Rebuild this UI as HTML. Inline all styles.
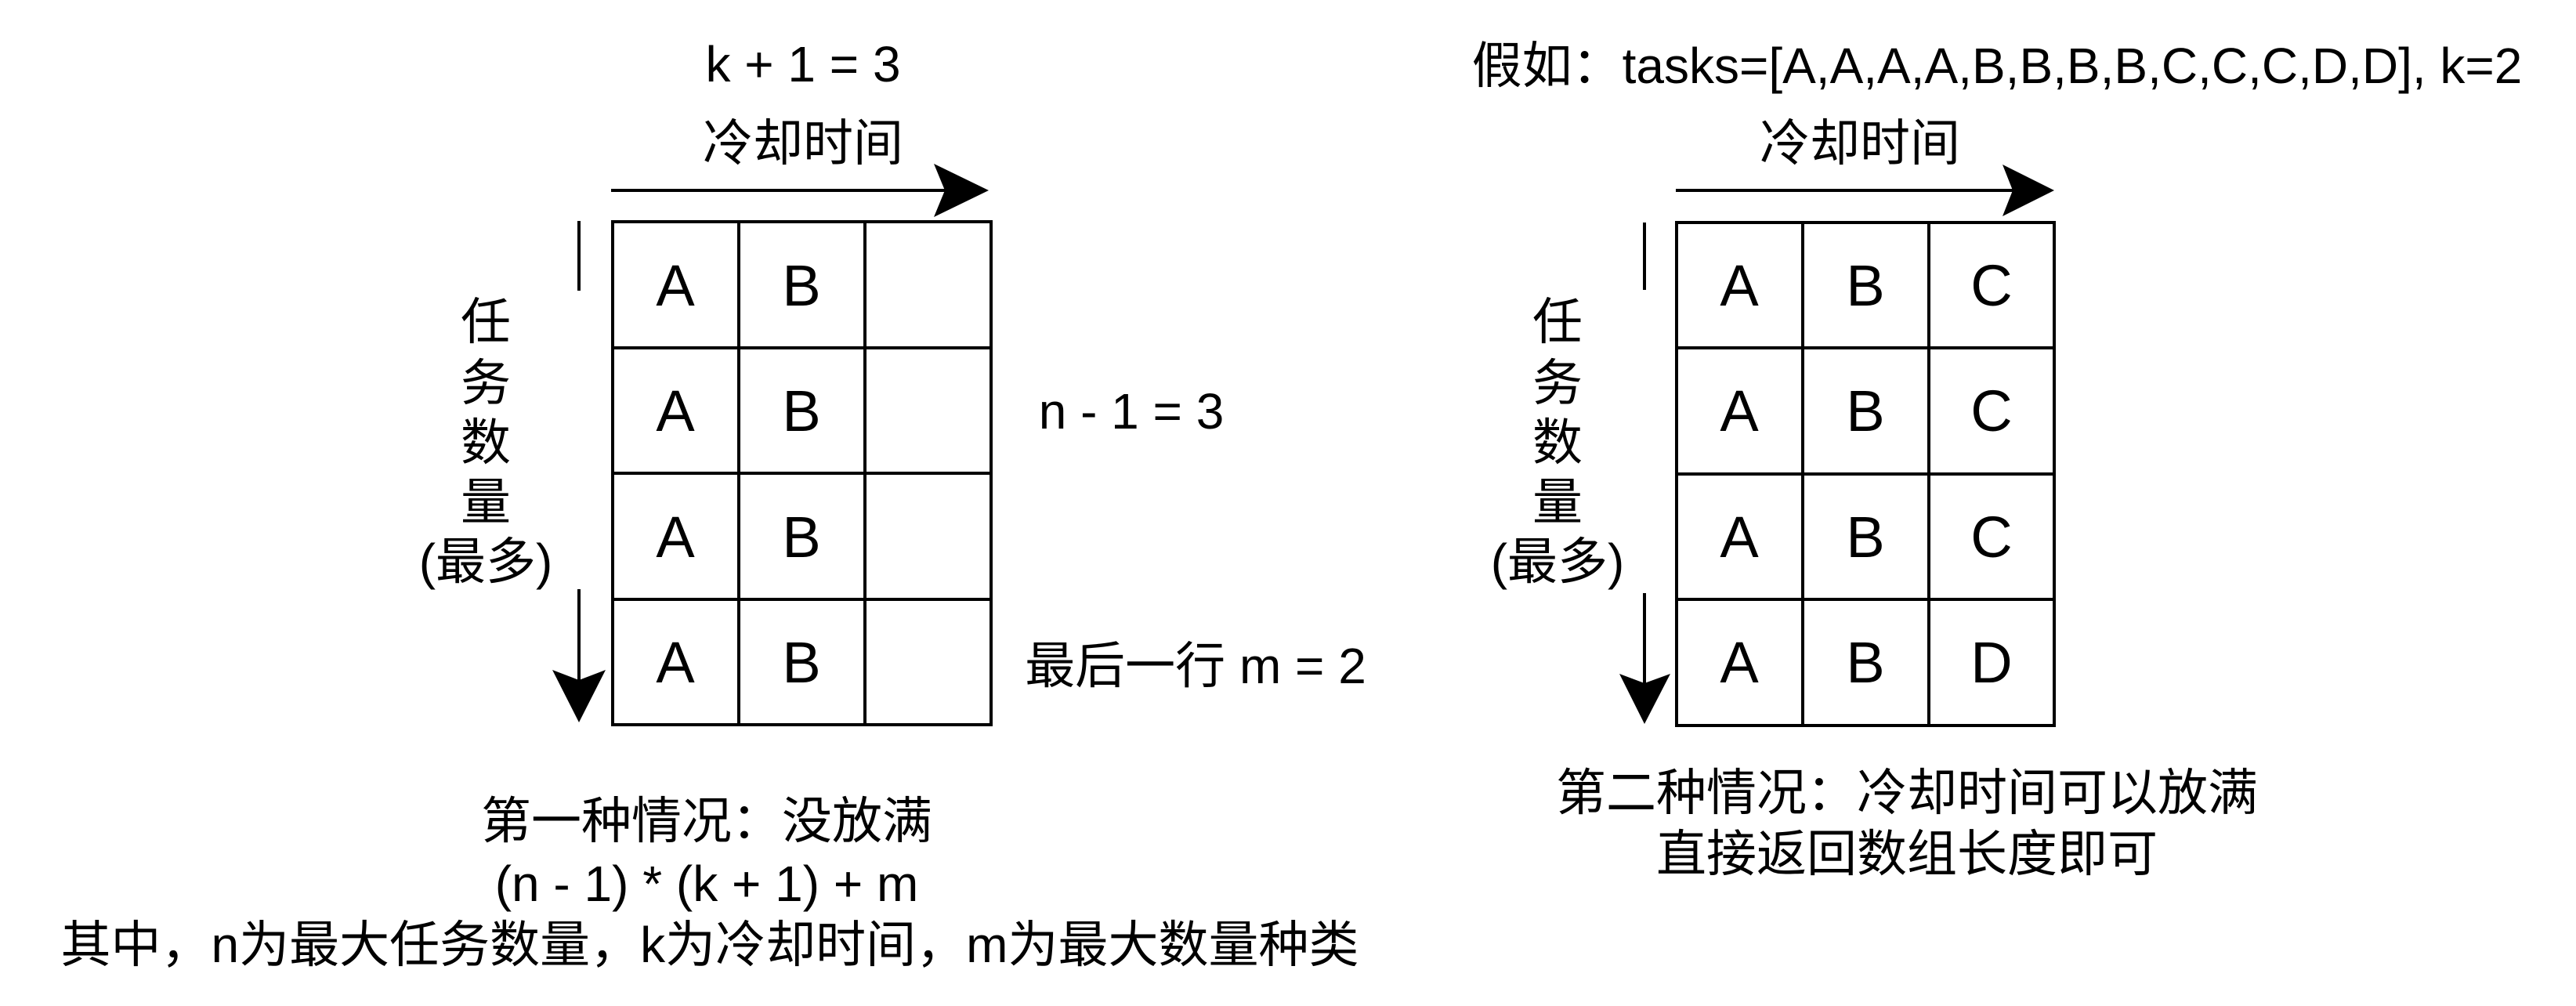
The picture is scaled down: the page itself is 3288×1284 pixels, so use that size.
<!DOCTYPE html>
<html><head><meta charset="utf-8"><style>
html,body{margin:0;padding:0;background:#fff;}
body{width:3288px;height:1284px;position:relative;overflow:hidden;font-family:"Liberation Sans","Noto Sans CJK SC",sans-serif;color:#000;}
#w{position:absolute;left:-4px;top:0;width:3288px;height:1284px;}
.t{position:absolute;white-space:nowrap;font-size:64px;line-height:64px;transform:translate(-50%,-50%);}
.c{position:absolute;font-size:74px;line-height:74px;transform:translate(-50%,-50%);}
svg{position:absolute;left:0;top:0;}
</style></head><body><div id="w">
<svg width="3288" height="1284">
<g stroke="#000" stroke-width="4" fill="none">
<rect x="786" y="283" width="483" height="642"/>
<line x1="947" y1="283" x2="947" y2="925"/><line x1="1108" y1="283" x2="1108" y2="925"/>
<line x1="786" y1="444" x2="1269" y2="444"/><line x1="786" y1="604" x2="1269" y2="604"/><line x1="786" y1="765" x2="1269" y2="765"/>
<rect x="2144" y="284" width="482" height="642"/>
<line x1="2305" y1="284" x2="2305" y2="926"/><line x1="2466" y1="284" x2="2466" y2="926"/>
<line x1="2144" y1="444" x2="2626" y2="444"/><line x1="2144" y1="605" x2="2626" y2="605"/><line x1="2144" y1="765" x2="2626" y2="765"/>
<line x1="784" y1="243" x2="1220" y2="243"/>
<line x1="2143" y1="243" x2="2580" y2="243"/>
<line x1="743" y1="282" x2="743" y2="371"/><line x1="743" y1="752" x2="743" y2="880"/>
<line x1="2103" y1="284" x2="2103" y2="370"/><line x1="2103" y1="757" x2="2103" y2="880"/>
</g>
<g fill="#000">
<path d="M1196 209 L1266 243 L1196 277 L1210 243 Z"/>
<path d="M2560 210 L2626 243 L2560 276 L2573 243 Z"/>
<path d="M709 855 L743 922 L777 855 L743 868 Z"/>
<path d="M2071 860 L2103 924 L2136 860 L2103 872 Z"/>
</g>
</svg>
<div class="t" style="left:1029px;top:82px">k + 1 = 3</div>
<div class="t" style="left:1029px;top:183px">冷却时间</div>
<div class="t" style="left:624px;top:411px">任</div>
<div class="t" style="left:624px;top:489px">务</div>
<div class="t" style="left:624px;top:565px">数</div>
<div class="t" style="left:624px;top:641px">量</div>
<div class="t" style="left:624px;top:717px">(最多)</div>
<div class="t" style="left:1448px;top:525px">n - 1 = 3</div>
<div class="t" style="left:1530px;top:850px">最后一行 m = 2</div>
<div class="t" style="left:906px;top:1048px">第一种情况：没放满</div>
<div class="t" style="left:906px;top:1128px">(n - 1) * (k + 1) + m</div>
<div class="t" style="left:910px;top:1206px;font-size:64px">其中，n为最大任务数量，k为冷却时间，m为最大数量种类</div>

<div class="t" style="left:2553px;top:84px">假如：tasks=[A,A,A,A,B,B,B,B,C,C,C,D,D], k=2</div>
<div class="t" style="left:2378px;top:183px">冷却时间</div>
<div class="t" style="left:1992px;top:411px">任</div>
<div class="t" style="left:1992px;top:489px">务</div>
<div class="t" style="left:1992px;top:565px">数</div>
<div class="t" style="left:1992px;top:641px">量</div>
<div class="t" style="left:1992px;top:717px">(最多)</div>
<div class="t" style="left:2438px;top:1012px">第二种情况：冷却时间可以放满</div>
<div class="t" style="left:2438px;top:1090px">直接返回数组长度即可</div>

<div class="c" style="left:866px;top:365px">A</div><div class="c" style="left:1027px;top:365px">B</div>
<div class="c" style="left:866px;top:525px">A</div><div class="c" style="left:1027px;top:525px">B</div>
<div class="c" style="left:866px;top:686px">A</div><div class="c" style="left:1027px;top:686px">B</div>
<div class="c" style="left:866px;top:846px">A</div><div class="c" style="left:1027px;top:846px">B</div>

<div class="c" style="left:2224px;top:365px">A</div><div class="c" style="left:2385px;top:365px">B</div><div class="c" style="left:2546px;top:365px">C</div>
<div class="c" style="left:2224px;top:525px">A</div><div class="c" style="left:2385px;top:525px">B</div><div class="c" style="left:2546px;top:525px">C</div>
<div class="c" style="left:2224px;top:686px">A</div><div class="c" style="left:2385px;top:686px">B</div><div class="c" style="left:2546px;top:686px">C</div>
<div class="c" style="left:2224px;top:846px">A</div><div class="c" style="left:2385px;top:846px">B</div><div class="c" style="left:2546px;top:846px">D</div>
</div></body></html>
